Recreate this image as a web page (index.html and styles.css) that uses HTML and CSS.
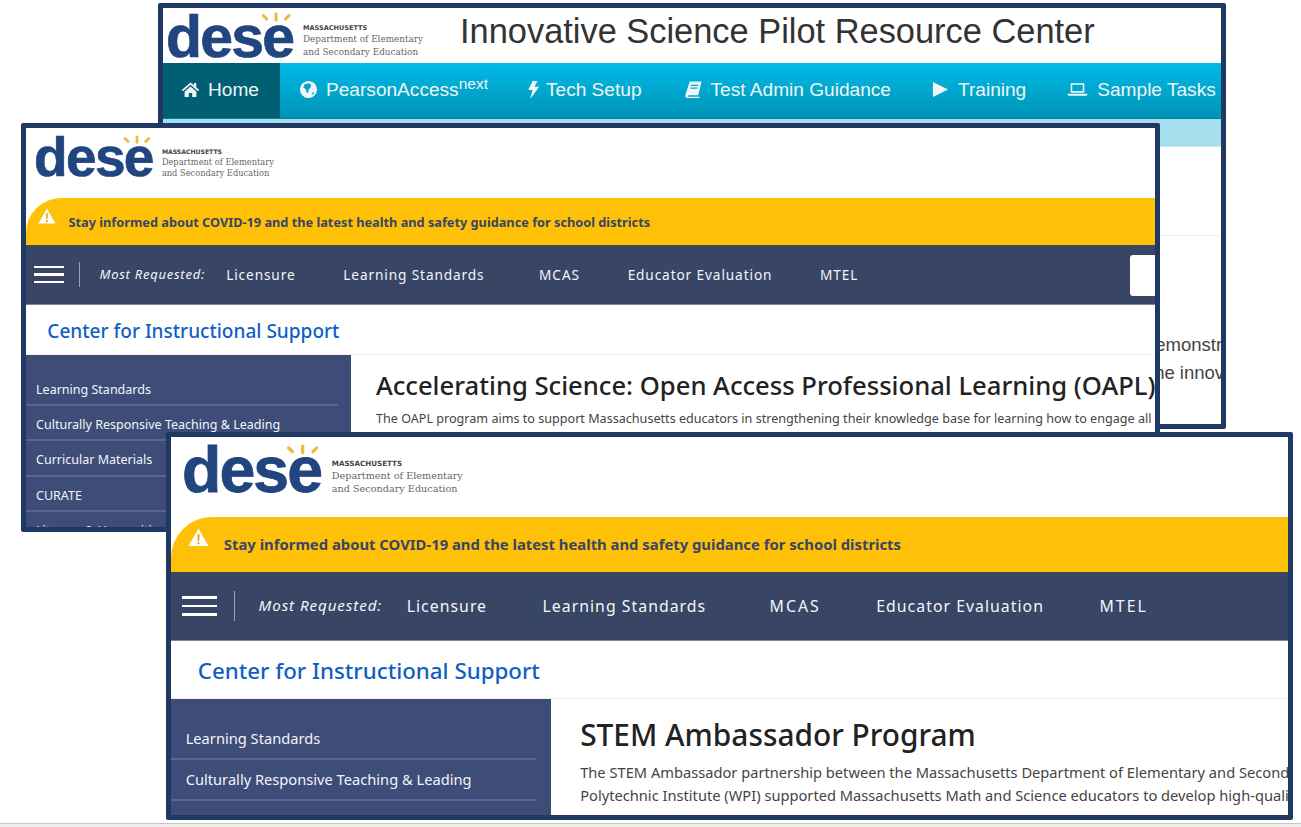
FILE: index.html
```html
<!DOCTYPE html>
<html lang="en">

<head>
    <meta charset="UTF-8">
    <meta name="viewport" content="width=device-width, initial-scale=1.0">
    <title>Innovative Science Pilot Resource Center</title>
    <link rel="stylesheet" href="styles.css">
</head>

<body>
    <div class="canvas">

        <!-- back window: resource center -->
        <div class="win win-back">
            <div class="rc-head">
                <div class="logo">
                    <div class="logo-mark">
                        <svg class="logo-sun" viewBox="0 0 40 14"><path d="M5 4l4 4M20 2v7M35 4l-4 4" /></svg>
                        dese
                    </div>
                    <div class="logo-text">
                        <div class="logo-state">MASSACHUSETTS</div>
                        <div>Department of Elementary</div>
                        <div>and Secondary Education</div>
                    </div>
                </div>
                <div class="rc-title">Innovative Science Pilot Resource Center</div>
            </div>
            <div class="rc-nav">
                <div class="rc-item rc-active">
                    <svg class="rc-icon" viewBox="0 0 20 20"><path d="M10 2.500L0.800 10.400l1.300 1.400L10 5.100l7.900 6.700 1.300-1.400-3.200-2.700V3.200h-2.400v2.300zM3.800 12.200V18h4.400v-4.400h3.600V18h4.400v-5.800L10 6.900z" /></svg>
                    Home
                </div>
                <div class="rc-item rc-pearson">
                    <svg class="rc-icon" viewBox="0 0 20 20"><circle cx="10" cy="10" r="9" /><path class="rc-land" d="M6 4.500l4-1 3 1.500-1 3.500-2 1.500v3l-2 .5-1-4-2.500-1.500zM13 14l3-1.500-1 3z" /></svg>
                    <span>PearsonAccess<sup class="rc-next">next</sup></span>
                </div>
                <div class="rc-item rc-tech">
                    <svg class="rc-icon" viewBox="0 0 20 20"><path d="M9 1h5l-3 6h5L6.500 20 9 10.500H4.500z" /></svg>
                    Tech Setup
                </div>
                <div class="rc-item rc-admin">
                    <svg class="rc-icon" viewBox="0 0 20 20"><path d="M6 1.500h12.500L15 16H5c-1 0-1 1.500 0 1.500h11.500L16 19H4c-2.500 0-3-1.500-2.500-3.500zM7.500 5l-.3 1.200h7.500l.3-1.200zM6.800 8l-.3 1.200H14l.3-1.200z" /></svg>
                    Test Admin Guidance
                </div>
                <div class="rc-item rc-training">
                    <svg class="rc-icon" viewBox="0 0 20 20"><path d="M2 2l16 8-16 8z" /></svg>
                    Training
                </div>
                <div class="rc-item rc-tasks">
                    <svg class="rc-icon rc-laptop" viewBox="0 0 20 20"><path d="M3.500 4h13v9h-13zM5 5.500v6h10v-6zM0.500 14h19v.8l-1 1.200h-17l-1-1.200z" /></svg>
                    Sample Tasks
                </div>
            </div>
            <div class="rc-band"></div>
            <div class="rc-rule"></div>
            <div class="rc-body">
                <p>demonstrate</p>
                <p class="rc-second">the innovative</p>
            </div>
        </div>

        <!-- middle window: OAPL page -->
        <div class="win win-mid site">
            <div class="site-head">
                <div class="logo">
                    <div class="logo-mark">
                        <svg class="logo-sun" viewBox="0 0 40 14"><path d="M5 4l4 4M20 2v7M35 4l-4 4" /></svg>
                        dese
                    </div>
                    <div class="logo-text">
                        <div class="logo-state">MASSACHUSETTS</div>
                        <div>Department of Elementary</div>
                        <div>and Secondary Education</div>
                    </div>
                </div>
            </div>
            <div class="alert">
                <svg class="alert-icon" viewBox="0 0 20 18"><path d="M10 .8L19.600 17.200H.4z" /><path class="alert-mark" d="M9 6h2l-.3 6.500H9.300zM9 13.700h2v1.900H9z" /></svg>
                <span class="alert-text">Stay informed about COVID-19 and the latest health and safety guidance for school districts</span>
            </div>
            <div class="req">
                <div class="burger"><span></span><span></span><span></span></div>
                <div class="req-label">Most Requested:</div>
                <div class="req-link">Licensure</div>
                <div class="req-link req-wide">Learning Standards</div>
                <div class="req-link req-caps">MCAS</div>
                <div class="req-link">Educator Evaluation</div>
                <div class="req-link req-caps">MTEL</div>
                <div class="search"></div>
            </div>
            <div class="office">Center for Instructional Support</div>
            <div class="columns">
                <div class="side">
                    <div class="side-item">Learning Standards</div>
                    <div class="side-item">Culturally Responsive Teaching &amp; Leading</div>
                    <div class="side-item">Curricular Materials</div>
                    <div class="side-item">CURATE</div>
                    <div class="side-item">Literacy &amp; Humanities</div>
                </div>
                <div class="main">
                    <h1>Accelerating Science: Open Access Professional Learning (OAPL)</h1>
                    <p>The OAPL program aims to support Massachusetts educators in strengthening their knowledge base for learning how to engage all</p>
                </div>
            </div>
        </div>

        <!-- front window: STEM page -->
        <div class="win win-front site">
            <div class="site-head">
                <div class="logo">
                    <div class="logo-mark">
                        <svg class="logo-sun" viewBox="0 0 40 14"><path d="M5 4l4 4M20 2v7M35 4l-4 4" /></svg>
                        dese
                    </div>
                    <div class="logo-text">
                        <div class="logo-state">MASSACHUSETTS</div>
                        <div>Department of Elementary</div>
                        <div>and Secondary Education</div>
                    </div>
                </div>
            </div>
            <div class="alert">
                <svg class="alert-icon" viewBox="0 0 20 18"><path d="M10 .8L19.600 17.200H.4z" /><path class="alert-mark" d="M9 6h2l-.3 6.500H9.300zM9 13.700h2v1.900H9z" /></svg>
                <span class="alert-text">Stay informed about COVID-19 and the latest health and safety guidance for school districts</span>
            </div>
            <div class="req">
                <div class="burger"><span></span><span></span><span></span></div>
                <div class="req-label">Most Requested:</div>
                <div class="req-link">Licensure</div>
                <div class="req-link req-wide">Learning Standards</div>
                <div class="req-link req-caps">MCAS</div>
                <div class="req-link">Educator Evaluation</div>
                <div class="req-link req-caps">MTEL</div>
            </div>
            <div class="office">Center for Instructional Support</div>
            <div class="columns">
                <div class="side">
                    <div class="side-item">Learning Standards</div>
                    <div class="side-item">Culturally Responsive Teaching &amp; Leading</div>
                    <div class="side-item">Curricular Materials</div>
                </div>
                <div class="main">
                    <h1>STEM Ambassador Program</h1>
                    <p>The STEM Ambassador partnership between the Massachusetts Department of Elementary and Secondary Education</p>
                    <p>Polytechnic Institute (WPI) supported Massachusetts Math and Science educators to develop high-quality</p>
                </div>
            </div>
        </div>
    </div>

    <div class="page-edge"></div>
</body>

</html>
```

FILE: styles.css
```css
* {
    box-sizing: border-box;
}

html,
body {
    height: 100%;
}

body {
    margin: 0;
    display: flex;
    flex-direction: column;
    overflow: hidden;
    background-color: #fff;
    font-family: "Noto Sans", "Open Sans", sans-serif;
}

.canvas {
    position: relative;
    flex: 1;
}

.page-edge {
    height: 4px;
    border-top: 1px solid #c8c8c8;
    background-color: #efefef;
}

/* the three screenshots on the slide */
.win {
    position: absolute;
    border: 5px solid #1f3864;
    border-radius: 2px;
    background-color: #fff;
    overflow: hidden;
}

.win-back {
    left: 158px;
    top: 3px;
    width: 1068px;
    height: 426px;
    font-size: 15px;
}

.win-mid {
    left: 21px;
    top: 123px;
    width: 1139px;
    height: 409px;
    font-size: 14px;
}

.win-front {
    left: 166px;
    top: 432px;
    width: 1127px;
    height: 388px;
    font-size: 16.4px;
}

/* logo, sized in em so that it scales with the window */
.logo {
    display: flex;
    align-items: flex-end;
}

.logo-mark {
    position: relative;
    font-family: "Liberation Sans", Arial, sans-serif;
    font-size: 3.93em;
    font-weight: 700;
    line-height: 0.98;
    letter-spacing: -0.03em;
    color: #21457f;
    -webkit-text-stroke: 0.012em #21457f;
}

.logo-sun {
    position: absolute;
    right: 0;
    top: 0.07em;
    width: 0.58em;
    height: 0.21em;
    fill: none;
    stroke: #f0b83c;
    stroke-width: 3.500;
    stroke-linecap: round;
}

.logo-text {
    margin-left: 1.1em;
    margin-bottom: 0.72em;
    font-family: "DejaVu Serif", serif;
    font-size: 0.59em;
    line-height: 1.35;
    color: #666;
}

.logo-state {
    font-family: "DejaVu Sans", sans-serif;
    font-size: 0.74em;
    font-weight: 700;
    color: #444;
}

/* back window */
.rc-head {
    display: flex;
    align-items: flex-start;
    height: 55px;
    padding-left: 3px;
    font-family: "Liberation Sans", Arial, sans-serif;
}

.rc-head .logo-text {
    margin-bottom: 0.85em;
    line-height: 1.42;
}

.rc-title {
    margin-left: 37px;
    margin-top: 4px;
    font-size: 34.400px;
    color: #333;
}

.rc-nav {
    display: flex;
    height: 56px;
    padding-bottom: 2px;
    border-bottom: 1px solid #067f9c;
    background: linear-gradient(#00bbe6, #0092b6);
    font-family: "Liberation Sans", Arial, sans-serif;
    font-size: 19.100px;
    color: #eef6f8;
    white-space: nowrap;
}

.rc-item {
    display: flex;
    flex: none;
    align-items: center;
    gap: 8px;
}

.rc-active {
    width: 117px;
    height: 55px;
    padding-left: 18px;
    padding-bottom: 2px;
    background-color: #005f73;
}

.rc-pearson {
    margin-left: 19px;
}

.rc-tech {
    margin-left: 36px;
    gap: 3px;
}

.rc-admin {
    margin-left: 42px;
}

.rc-training {
    margin-left: 40px;
}

.rc-tasks {
    margin-left: 41px;
    gap: 9px;
}

.rc-icon {
    width: 19px;
    height: 19px;
    fill: #eef6f8;
}

.rc-laptop {
    width: 21px;
    height: 21px;
}

.rc-land {
    fill: #0aa0c6;
}

.rc-next {
    font-size: 15.500px;
    line-height: 0;
}

.rc-band {
    height: 28px;
    border-bottom: 1px solid #c4e8f1;
    background-color: #a5dfed;
}

.rc-rule {
    height: 89px;
    border-bottom: 1px solid #eee;
}

.rc-body {
    padding-top: 95px;
    padding-left: 982px;
    font-family: "Liberation Sans", Arial, sans-serif;
    font-size: 18.500px;
    line-height: 28px;
    color: #444;
    white-space: nowrap;
}

.rc-body p {
    margin: 0;
}

.rc-second {
    padding-left: 4px;
}

/* shared DESE page */
.site-head {
    height: 70px;
    padding: 3px 0 0 8px;
}

.win-front .site-head {
    height: 80px;
    padding: 2px 0 0 11px;
}

.alert {
    display: flex;
    height: 3.360em;
    padding-left: 0.85em;
    border-top-left-radius: 2.5em;
    background-color: #ffc107;
}

.win-front .alert {
    padding-left: 1.04em;
}

.alert-icon {
    flex: none;
    width: 1.28em;
    height: 1.15em;
    margin-top: 0.7em;
    fill: #fff;
}

.alert-mark {
    fill: #e0a800;
}

.alert-text {
    margin-left: 1em;
    align-self: center;
    font-size: 0.91em;
    font-weight: 700;
    color: #394565;
    white-space: nowrap;
}

.win-front .alert-text {
    padding-bottom: 2px;
    font-size: 0.905em;
}

.req {
    display: flex;
    align-items: center;
    height: 60px;
    padding-left: 0.6em;
    border-bottom: 1px solid #78839c;
    background-color: #394565;
    color: #f2f5fa;
    white-space: nowrap;
}

.win-front .req {
    height: 69px;
    padding-left: 0.7em;
}

.burger {
    flex: none;
    width: 2.1em;
}

.burger span {
    display: block;
    height: 0.17em;
    margin: 0.36em 0;
    background-color: #fff;
}

.req-label {
    margin-left: 1.15em;
    padding-left: 1.53em;
    border-left: 1px solid #9aa3b8;
    font-size: 0.925em;
    font-style: italic;
    line-height: 1.95em;
    letter-spacing: 0.06em;
}

.req-link {
    margin-left: 3.5em;
    font-size: 0.975em;
    letter-spacing: 0.065em;
}

.req-label + .req-link {
    margin-left: 1.55em;
}

.req-wide + .req-link {
    margin-left: 4em;
}

.win-front .req-link {
    font-size: 0.965em;
}

.win-front .req-caps {
    letter-spacing: 0.13em;
}

.search {
    width: 1.8em;
    height: 2.950em;
    margin-top: 2px;
    margin-left: auto;
    border-radius: 3px 0 0 3px;
    background-color: #fff;
}

.office {
    display: flex;
    align-items: center;
    height: 2.6em;
    padding-top: 3px;
    padding-left: 1.12em;
    border-bottom: 1px solid #eee;
    font-size: 1.36em;
    font-weight: 500;
    color: #0f5fc4;
}

.win-front .office {
    padding-top: 2px;
    padding-left: 1.2em;
}

.columns {
    display: flex;
    height: 24em;
}

.side {
    flex: none;
    width: 23.2em;
    padding-top: 1.2em;
    padding-right: 0.92em;
    background-color: #3d4d78;
    color: #f2f4f8;
}

.side-item {
    height: 2.8em;
    padding-left: 0.8em;
    border-bottom: 2px solid #5a6690;
    font-size: 0.895em;
    line-height: 3em;
    white-space: nowrap;
}

.win-front .side-item {
    padding-left: 1em;
    line-height: 2.7em;
}

.main {
    flex: 1;
    padding: 0.95em 0 0 1.8em;
    color: #444;
    white-space: nowrap;
    overflow: hidden;
}

.main h1 {
    margin: 0 0 0.2em;
    font-size: 1.83em;
    font-weight: 500;
    line-height: 1.4;
    color: #222;
}

.main p {
    margin: 0;
    font-size: 0.9em;
    line-height: 1.6;
}

.win-front .main {
    padding-top: 0.9em;
    padding-left: 1.75em;
}

.win-front h1 {
    margin-bottom: 0.17em;
    font-size: 1.82em;
}

.win-front .main p {
    font-size: 0.895em;
}
```
